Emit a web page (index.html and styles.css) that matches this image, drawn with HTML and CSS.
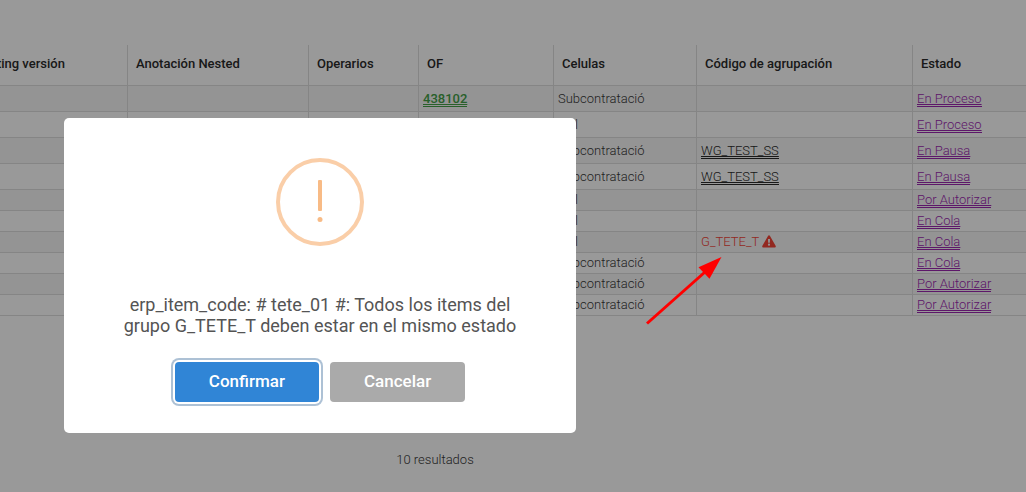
FILE: index.html
```html
<!DOCTYPE html>
<html lang="es">
<head>
<meta charset="utf-8">
<title>Órdenes de fabricación</title>
<link rel="stylesheet" href="styles.css">
</head>
<body>
<main class="page">
  <table class="orders">
    <colgroup>
      <col class="col-version"><col class="col-note"><col class="col-workers"><col class="col-of"><col class="col-cells"><col class="col-group"><col>
    </colgroup>
    <thead>
      <tr><th>Nesting versión</th><th>Anotación Nested</th><th>Operarios</th><th>OF</th><th>Celulas</th><th>Código de agrupación</th><th>Estado</th></tr>
    </thead>
    <tbody>
      <tr class="tall"><td></td><td></td><td></td><td><a class="link order" href="#">438102</a></td><td>Subcontratació</td><td></td><td><a class="link state" href="#">En Proceso</a></td></tr>
      <tr class="tall"><td></td><td></td><td></td><td></td><td>Tall</td><td></td><td><a class="link state" href="#">En Proceso</a></td></tr>
      <tr class="tall"><td></td><td></td><td></td><td></td><td>Subcontratació</td><td><a class="link" href="#">WG_TEST_SS</a></td><td><a class="link state" href="#">En Pausa</a></td></tr>
      <tr class="tall"><td></td><td></td><td></td><td></td><td>Subcontratació</td><td><a class="link" href="#">WG_TEST_SS</a></td><td><a class="link state" href="#">En Pausa</a></td></tr>
      <tr><td></td><td></td><td></td><td></td><td>Tall</td><td></td><td><a class="link state" href="#">Por Autorizar</a></td></tr>
      <tr><td></td><td></td><td></td><td></td><td>Tall</td><td></td><td><a class="link state" href="#">En Cola</a></td></tr>
      <tr><td></td><td></td><td></td><td></td><td>Tall</td><td><span class="conflict">G_TETE_T
        <svg class="warning" viewBox="0 0 14 13" aria-hidden="true"><path fill="currentColor" fill-rule="evenodd" d="M7 0.3c.4 0 .8.2 1 .6l5.6 9.9c.5.8-.1 1.7-1 1.7H1.400c-.9 0-1.500-.9-1-1.700L6 .9c.2-.4.6-.6 1-.6zM6 4l.2 3.700h1.600L8 4zM7 8.600a1.100 1.100 0 1 0 0 2.200 1.100 1.100 0 0 0 0-2.200z"/></svg></span></td><td><a class="link state" href="#">En Cola</a></td></tr>
      <tr><td></td><td></td><td></td><td></td><td>Subcontratació</td><td></td><td><a class="link state" href="#">En Cola</a></td></tr>
      <tr><td></td><td></td><td></td><td></td><td>Subcontratació</td><td></td><td><a class="link state" href="#">Por Autorizar</a></td></tr>
      <tr><td></td><td></td><td></td><td></td><td>Subcontratació</td><td></td><td><a class="link state" href="#">Por Autorizar</a></td></tr>
    </tbody>
  </table>
  <p class="results">10 resultados</p>
</main>

<div class="backdrop">
  <section class="modal" role="alertdialog" aria-modal="true" aria-describedby="message">
    <svg class="modal-icon" viewBox="0 0 88 88" aria-hidden="true">
      <circle cx="44" cy="44" r="42" fill="none" stroke="#facea8" stroke-width="4"/>
      <rect x="42" y="22" width="4" height="31" rx="1" fill="#f8bb86"/>
      <circle cx="44" cy="61.500" r="2.500" fill="#f8bb86"/>
    </svg>
    <p class="message" id="message">erp_item_code: # tete_01 #: Todos los items del grupo G_TETE_T deben estar en el mismo estado</p>
    <div class="actions">
      <button class="button confirm" type="button">Confirmar</button>
      <button class="button cancel" type="button">Cancelar</button>
    </div>
  </section>
</div>

<svg class="arrow" viewBox="0 0 78 70" aria-hidden="true">
  <path d="M2 67.500L60 16" fill="none" stroke="#f00" stroke-width="3"/>
  <path d="M76.500 1L53.500 11.300 64.500 22.800z" fill="#f00"/>
</svg>
</body>
</html>
```
FILE: styles.css
```css
* {
  box-sizing: border-box;
}

body {
  margin: 0;
  min-height: 100vh;
  background: #fff;
  color: #383838;
  font: 300 13px/16px Roboto, sans-serif;
}

.page {
  padding-top: 45px;
  overflow: hidden;
}

/* The first column is partly scrolled out of view. */
.orders {
  width: calc(100% + 35px);
  margin-left: -35px;
  table-layout: fixed;
  border-spacing: 0;
}

.col-version { width: 162px; }
.col-note { width: 181px; }
.col-workers { width: 110px; }
.col-of { width: 135px; }
.col-cells { width: 143px; }
.col-group { width: 216px; }

.orders th,
.orders td {
  border-left: 1px solid #dedede;
  border-bottom: 1px solid #dedede;
  text-align: left;
  white-space: nowrap;
}

.orders th {
  height: 41px;
  padding: 0 8px 2px;
  color: #2b2b2b;
  font-weight: 500;
}

.orders td {
  height: 21px;
  padding: 0 4px;
}

.orders .tall td {
  height: 26px;
}

.orders tbody tr:nth-child(odd) {
  background: #f7f7f7;
}

.link {
  border-bottom: 1px solid;
  color: #2b2b2b;
  text-decoration: underline 1px;
  text-decoration-skip-ink: none;
}

.order {
  color: #43a047;
  font-weight: 500;
}

.state {
  color: #9c27b0;
}

.conflict {
  color: #f44336;
}

.warning {
  width: 14px;
  height: 13px;
  vertical-align: -2px;
}

.results {
  margin: 0;
  padding: 136px 156px 24px 0;
  text-align: center;
}

.backdrop {
  position: fixed;
  inset: 0;
  display: flex;
  align-items: flex-start;
  padding: 118px 64px 0;
  background: rgba(0, 0, 0, 0.4);
}

.modal {
  display: flex;
  flex-direction: column;
  align-items: center;
  width: 512px;
  max-width: 100%;
  padding: 40px 56px 31px;
  border-radius: 5px;
  background: #fff;
}

.modal-icon {
  width: 88px;
  height: 88px;
}

.message {
  margin: 48px 0 26px;
  color: #545454;
  font-size: 18px;
  font-weight: 400;
  line-height: 21px;
  text-align: center;
}

.actions {
  display: flex;
  gap: 11px;
}

.button {
  height: 40px;
  padding: 0 34px 2px;
  border: 0;
  border-radius: 4px;
  color: #fff;
  font: 500 17px/20px Roboto, sans-serif;
}

.confirm {
  background: #3085d6;
  box-shadow: 0 0 0 2px #fff, 0 0 0 4px rgba(50, 100, 150, 0.4);
}

.cancel {
  background: #aaa;
}

.arrow {
  position: absolute;
  top: 256px;
  left: 645px;
  width: 78px;
  height: 70px;
}
```
